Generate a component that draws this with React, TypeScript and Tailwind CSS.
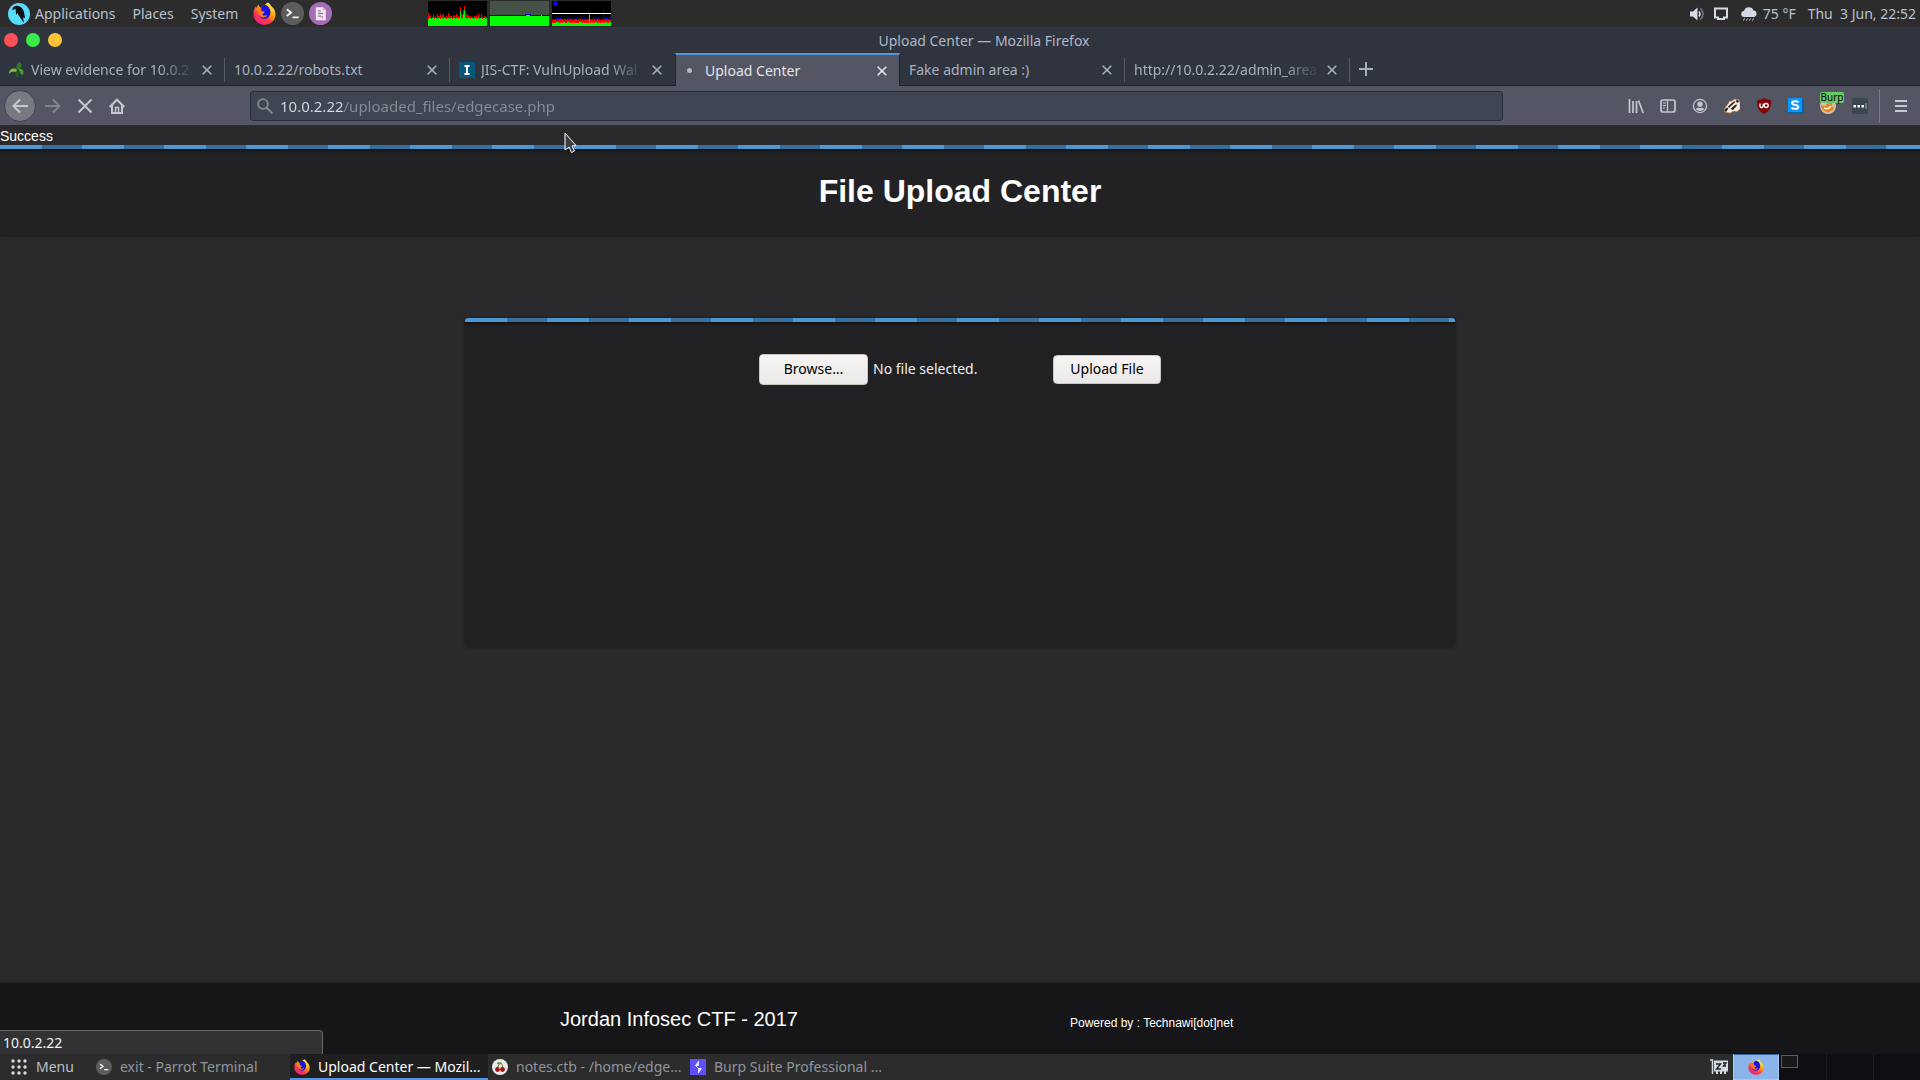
import React from "react";

const stripe =
  "h-1 bg-[repeating-linear-gradient(90deg,#4f97d3_0px,#4f97d3_42px,#366e9e_42px,#366e9e_82px)]";

function FirefoxLogo({ className }: { className: string }) {
  return (
    <svg viewBox="0 0 24 24" className={className} aria-hidden="true">
      <defs>
        <linearGradient id="fox" x1="0.8" y1="0.1" x2="0.25" y2="0.95">
          <stop offset="0" stopColor="#fff44f" />
          <stop offset="0.4" stopColor="#ff980e" />
          <stop offset="0.7" stopColor="#ff3647" />
          <stop offset="1" stopColor="#f0207f" />
        </linearGradient>
      </defs>
      <path
        fill="url(#fox)"
        d="M15.5.5c1.500 1 3 2.500 3.800 4.300C21.500 6.300 23.500 9.500 23.500 13c0 6-5 10.700-11.400 10.700S.6 18.900.6 12.700c0-3 .7-6.300 2.600-8.300.2.800.4 1.300.8 1.900.3-1.500.9-2.700 1.900-3.600.1 1.500.9 2.700 2 3.200z"
      />
      <path
        fill="#1a12e0"
        d="M8 6.500c1-2 3-3.500 5-3.700 2.600 1 4.500 3.300 5 6.200.8 4-1.600 8.500-6 8.500-3.400 0-5.700-2.400-6-5.300 1 .8 2.300 1 3.500.5L12 11.500c-.6-1-2-1.300-3.300-1.300-.9-.8-.8-1.600 0-2.300z"
      />
      <path
        fill="#ff7a1a"
        d="M5 7.500C6.300 6.600 8 6.600 9.200 7.300c-.8.800-.9 1.700-.2 2.300h2.600c.5.300.4.900 0 1.300l-2 1.300c.2 1.300 1 2 2.200 2 1.300 0 2-.8 3.200-.3-.8 1.600-2.700 2.500-4.700 2.200C7 15.600 5 12.500 5 7.500z"
      />
    </svg>
  );
}

function TerminalIcon({ className }: { className: string }) {
  return (
    <svg viewBox="0 0 24 24" className={className} fill="none" aria-hidden="true">
      <circle cx="12" cy="12" r="12" fill="#5c5c5c" />
      <path d="M6 7.500l4.500 3.500L6 14.500M12 16h6.500" stroke="#f0f0f0" strokeWidth="2" />
    </svg>
  );
}

function ParrotIcon() {
  return (
    <svg viewBox="0 0 22 22" className="size-[22px]" aria-hidden="true">
      <circle cx="11" cy="11" r="11" fill="#55dcff" />
      <path
        fill="#0b1014"
        d="M4.500 5.500C5.300 3.600 7 2.700 9 2.800c3.200.2 5.700 2.200 6.700 5.200.8 2.600.8 5 1.500 7.300l-2.100-1.100.8 5.700-3.600-5.200C11 13 9.800 11.500 9.500 9.600L8.700 12C7.700 10 7.600 8 7.900 6.300 6.700 6 5.600 6 4.500 7.800z"
      />
    </svg>
  );
}

function NotesIcon() {
  return (
    <svg viewBox="0 0 22 22" className="size-[23px]" aria-hidden="true">
      <circle cx="11" cy="11" r="11" fill="#a56db3" />
      <path d="M6.500 5h7l2.500 2.500V17.500H6.500z" fill="#f4eef5" />
      <path d="M13 5v3h3" fill="#cbb0d2" />
      <path d="M8.500 8.500h3M8.500 11h5M8.500 13.500h3M12.500 13.500v2" stroke="#a56db3" strokeWidth="1.200" />
    </svg>
  );
}

const cpu = [13, 10, 11, 8, 9, 12, 9, 10, 8, 12, 10, 9, 12, 8, 11, 12, 9, 9, 10, 8, 13, 9, 10, 10, 8, 11, 10, 9, 12, 9, 10, 9, 19, 12, 11, 16, 20, 13, 11, 12, 10, 9, 10, 9, 9, 8, 10, 9, 11, 9, 13, 9, 8, 12, 9, 8, 10, 9, 9];

function Graphs() {
  return (
    <div className="flex gap-[3px]" aria-label="System monitor">
      <svg viewBox="0 0 59 25" className="h-[25px] w-[59px]" shapeRendering="crispEdges">
        <rect width="59" height="25" fill="#000" />
        {cpu.map((v, i) => (
          <g key={i}>
            <rect x={i} y={25 - v} width="1" height={v} fill="#f00" />
            <rect x={i} y={v > 15 ? 29 - v : 17 + ((i * 5) % 3 === 0 ? 1 : 0)} width="1" height="25" fill="#0f0" />
          </g>
        ))}
      </svg>
      <svg viewBox="0 0 59 25" className="h-[25px] w-[59px]" shapeRendering="crispEdges">
        <rect width="59" height="25" fill="#465248" />
        <rect y="14" width="59" height="11" fill="#0f0" />
        <path d="M0 14h35v-1h5v1h19" stroke="#00c" fill="none" />
        <path d="M36 14h4M51 14h1" stroke="#0f0" strokeWidth="1" />
      </svg>
      <svg viewBox="0 0 59 25" className="h-[25px] w-[59px]" shapeRendering="crispEdges">
        <rect width="59" height="25" fill="#000" />
        <rect x="1" width="5" height="5" fill="#00f" />
        {cpu.map((v, i) => (
          <g key={i}>
            <rect x={i} y={i === 51 ? 9 : i === 37 ? 11 : Math.min(18, 25 - (v % 10))} width="1" height="25" fill="#00c" />
            <rect x={i} y={i === 37 ? 12 : 18 + (v % 2)} width="1" height="25" fill="#f00" />
            <rect x={i} y={i === 37 ? 14 : 21 + (v % 3 === 0 ? 0 : 1)} width="1" height="25" fill="#0f0" />
          </g>
        ))}
        <rect y="12" width="59" height="1" fill="#fff" />
      </svg>
    </div>
  );
}

function TopPanel() {
  return (
    <header className="relative flex h-[27px] items-center justify-between bg-[#2c2c2c] text-[#b9c0cc]">
      <div className="flex items-center">
        <button className="ml-2 flex items-center gap-[5px]">
          <ParrotIcon />
          Applications
        </button>
        <button className="ml-[17px]">Places</button>
        <button className="ml-[17px]">System</button>
        <div className="ml-[15px] flex items-center gap-[5px]">
          <button aria-label="Firefox"><FirefoxLogo className="size-[23px]" /></button>
          <button aria-label="Terminal"><TerminalIcon className="size-[23px]" /></button>
          <button aria-label="Text editor"><NotesIcon /></button>
        </div>
      </div>
      <div className="absolute top-px left-[428px]"><Graphs /></div>
      <div className="flex items-center pr-1">
        <svg viewBox="0 0 16 16" className="size-4" fill="none" aria-label="Volume">
          <path d="M1 5.500h3L8.500 1.500v13L4 10.500H1z" fill="#d3dae3" />
          <path d="M10 5.500q2 2.500 0 5" stroke="#d3dae3" strokeWidth="1.500" />
          <path d="M11.500 2.500q5 5.500 0 11" stroke="#74787d" strokeWidth="1.500" />
        </svg>
        <svg viewBox="0 0 16 16" className="ml-2 size-4" fill="none" aria-label="Network">
          <path d="M2 2.500h12v9H11v1.500H5v-1.500H2z" stroke="#d3dae3" strokeWidth="2" />
        </svg>
        <svg viewBox="0 0 16 16" className="ml-3 size-4" aria-label="Rain">
          <path d="M3.500 11a3 3 0 0 1-.5-6A5 5 0 0 1 12.500 4.500 3.300 3.300 0 0 1 13 11z" fill="#d3dae3" />
          <path d="M3.500 12.500l-1 2M6.500 12.500l-1 2M9.500 12.500l-1 2M12.500 12.500l-1 2" stroke="#d3dae3" />
        </svg>
        <span className="ml-1.5">75 °F</span>
        <span className="ml-3 whitespace-pre">Thu  3 Jun, 22:52</span>
      </div>
    </header>
  );
}

function Close() {
  return (
    <button aria-label="Close tab" className="flex size-4 shrink-0 items-center justify-center">
      <svg viewBox="0 0 10 10" className="size-2.5" stroke="currentColor" strokeWidth="1.600" aria-hidden="true">
        <path d="M.7.7l8.600 8.600M9.300.7L.7 9.300" />
      </svg>
    </button>
  );
}

const tabs = [
  { title: "View evidence for 10.0.2.", icon: "leaf", fade: true },
  { title: "10.0.2.22/robots.txt" },
  { title: "JIS-CTF: VulnUpload Wal", icon: "jis", fade: true },
  { title: "Upload Center", icon: "dot", active: true },
  { title: "Fake admin area :)" },
  { title: "http://10.0.2.22/admin_area", fade: true },
];

function TabIcon({ kind }: { kind?: string }) {
  if (kind === "leaf")
    return (
      <svg viewBox="0 0 16 16" className="mr-1.5 size-4 shrink-0" aria-hidden="true">
        <path d="M7.500 6Q7 2 11 0q3.500 3 0 6.500L9 7.500z" fill="#2f7d2a" />
        <path d="M0 12q0-6 6-5.500 3 1 1.500 3.500Q3 8.500 0 12z" fill="#7cc243" />
        <path d="M9 7q7-1 5 5.500-1.500 1-2.500-1-.5-3-2.500-4.500z" fill="#4b9e31" />
        <path d="M8 8q3.500 3 .5 8-3.500-3-.5-8z" fill="#245f22" />
      </svg>
    );
  if (kind === "jis")
    return (
      <svg viewBox="0 0 16 16" className="mr-1.5 size-4 shrink-0" aria-hidden="true">
        <rect width="16" height="16" fill="#045879" />
        <path d="M5.500 4h5M5.500 12h5M8 4v8" stroke="#fff" strokeWidth="2" />
      </svg>
    );
  if (kind === "dot")
    return (
      <span className="mr-2 flex size-4 shrink-0 items-center justify-center">
        <span className="size-[5px] rounded-full bg-[#b6bac3]" />
      </span>
    );
  return null;
}

function Tabs() {
  return (
    <nav className="flex h-[33px] items-stretch">
      {tabs.map((t) => (
        <div
          key={t.title}
          className={
            t.active
              ? "flex w-[225px] items-center border-x border-t-2 border-x-[#20232b] border-t-[#5294e2] bg-[#545763] pr-[9px] pl-[5px] text-[#e3e6ec]"
              : "relative flex w-[225px] items-center border-b border-[#20232b] pt-0.5 pr-[10px] pl-[9px] text-[#a9b1bf]"
          }
        >
          <TabIcon kind={t.icon} />
          <span
            className={
              t.fade
                ? "min-w-0 flex-1 whitespace-nowrap [mask-image:linear-gradient(to_left,transparent,black_36px)]"
                : "min-w-0 flex-1 whitespace-nowrap"
            }
          >
            {t.title}
          </span>
          <span className="ml-1 flex"><Close /></span>
          {!t.active && !t.title.startsWith("JIS") && (
            <span className="absolute top-[5px] right-0 h-6 w-px bg-[#555963]" />
          )}
        </div>
      ))}
      <div className="flex flex-1 items-center border-b border-[#20232b] pl-[9px] text-[#a9b1bf]">
        <button aria-label="New tab">
          <svg viewBox="0 0 14 14" className="size-3.5" stroke="currentColor" strokeWidth="2" aria-hidden="true">
            <path d="M7 0v14M0 7h14" />
          </svg>
        </button>
      </div>
    </nav>
  );
}

function ToolButton({ label, children }: { label: string; children: React.ReactNode }) {
  return (
    <button aria-label={label} className="flex size-8 items-center justify-center">
      {children}
    </button>
  );
}

function Toolbar() {
  return (
    <div className="flex h-10 items-center border-b border-[#2b2e39] bg-[#545763] pl-1 text-[#c3c8d2]">
      <button aria-label="Back" className="mr-px flex size-8 items-center justify-center rounded-full border border-[#3d414c] bg-[#777a83]">
        <svg viewBox="0 0 16 16" className="size-4" fill="none" stroke="currentColor" strokeWidth="2" aria-hidden="true">
          <path d="M16 8H1.500M8 1.500L1.500 8 8 14.500" />
        </svg>
      </button>
      <ToolButton label="Forward">
        <svg viewBox="0 0 16 16" className="size-4" fill="none" stroke="#80848e" strokeWidth="2" aria-hidden="true">
          <path d="M0 8h14.500M8 1.500L14.500 8 8 14.500" />
        </svg>
      </ToolButton>
      <ToolButton label="Stop">
        <svg viewBox="0 0 16 16" className="size-4" fill="none" stroke="currentColor" strokeWidth="2" aria-hidden="true">
          <path d="M1.500 1.500l13 13M14.500 1.500l-13 13" />
        </svg>
      </ToolButton>
      <ToolButton label="Home">
        <svg viewBox="0 0 16 16" className="size-4" fill="none" stroke="currentColor" strokeWidth="2" aria-hidden="true">
          <path d="M.7 9L8 1.700 15.300 9M3 7.500V15h10V7.500" />
          <path d="M6.500 15V9.500h3V15" strokeWidth="1.500" />
        </svg>
      </ToolButton>
      <form className="mr-[117px] ml-[117px] flex h-[30px] flex-1 items-center rounded-[3px] border border-[#2b2e39] bg-[#404552] pl-1.5" onSubmit={(e) => e.preventDefault()}>
        <svg viewBox="0 0 16 16" className="size-4 shrink-0" fill="none" stroke="#878c97" strokeWidth="1.800" aria-hidden="true">
          <circle cx="6" cy="6" r="4.800" />
          <path d="M9.500 9.500l6 6" />
        </svg>
        <input
          aria-label="Address"
          defaultValue="10.0.2.22/uploaded_files/edgecase.php"
          className="ml-[7px] w-full bg-[linear-gradient(90deg,#d3dae3_64px,#868b96_64px)] bg-clip-text text-[15px] text-transparent outline-none"
        />
      </form>
      <ToolButton label="Library">
        <svg viewBox="0 0 16 16" className="size-4" stroke="currentColor" strokeWidth="2" aria-hidden="true">
          <path d="M1.500 1v14M5 3v12M8.500 3v12M10.500 2.500L15.200 15" strokeWidth="1.700" />
        </svg>
      </ToolButton>
      <ToolButton label="Sidebars">
        <svg viewBox="0 0 16 16" className="size-4" fill="none" stroke="currentColor" strokeWidth="1.700" aria-hidden="true">
          <rect x="1" y="2" width="14" height="12" rx="2" />
          <path d="M7.500 2v12M3 5h3M3 7.500h3M3 10h2" strokeWidth="1.200" />
        </svg>
      </ToolButton>
      <ToolButton label="Account">
        <svg viewBox="0 0 16 16" className="size-4" aria-hidden="true">
          <circle cx="8" cy="8" r="6.600" fill="none" stroke="currentColor" strokeWidth="1.200" />
          <circle cx="8" cy="6.200" r="2.700" fill="currentColor" />
          <path d="M3.500 10.500q1.500 0 2.500-1 2 1 4 0 1 1 2.500 1Q11 13 8 13t-4.500-2.500z" fill="currentColor" />
        </svg>
      </ToolButton>
      <ToolButton label="Privacy Badger">
        <svg viewBox="0 0 16 16" className="size-4" aria-hidden="true">
          <path d="M0 11.500L4 6l1.500-2.500L8 3l3-2 2 1 1.500-.5L16 5v6l-3 2.500-3-.5-4 2-5-1z" fill="#fbf0e4" stroke="#e08a45" strokeWidth=".7" />
          <path d="M0 12l3-2.500 1.500 1L2 14zM4 8.500L9 4l2.500-1-1 2L7.500 7.500 5 10zM6.500 11L11 7l2.500-.5-1 1.500L9 12zM11.500 2.500L14 2l1 2-2 1z" fill="#252020" />
        </svg>
      </ToolButton>
      <ToolButton label="uBlock Origin">
        <svg viewBox="0 0 16 16" className="size-4" fill="none" aria-hidden="true">
          <path d="M8 0q3 2 7 2 .8 11-7 14Q.2 13 1 2q4 0 7-2z" fill="#800606" />
          <path d="M4 5.500v2.700q0 1.300 1.500 1.300T7.200 8.200V5.500" stroke="#fff" strokeWidth="1.300" />
          <circle cx="10.200" cy="7.500" r="2" stroke="#fff" strokeWidth="1.300" />
        </svg>
      </ToolButton>
      <ToolButton label="Stylus">
        <svg viewBox="0 0 16 16" className="size-4" fill="none" aria-hidden="true">
          <path d="M0 14h14V0l2 2v14H2z" fill="#0462a8" />
          <rect width="14" height="14" fill="#0a96ff" />
          <path d="M10.500 4.300Q9.500 3.200 7 3.200 4 3.200 4 5q0 1.500 3 1.900 3.300.3 3.300 2 0 1.900-3.300 1.900-2.500 0-3.500-1.200" stroke="#fff" strokeWidth="1.900" />
        </svg>
      </ToolButton>
      <div className="relative">
        <ToolButton label="FoxyProxy">
          <svg viewBox="0 0 16 16" className="size-4" aria-hidden="true">
            <circle cx="8" cy="8" r="8" fill="#d5c1a6" />
            <path d="M1 7q4 2 5 0 3-4 7-2-2 1-1 3l2 2q-2 4-6 4T1 9z" fill="#e58721" />
            <path d="M4 10q4 2 7-2" stroke="#fff0d7" strokeWidth="1.500" fill="none" />
          </svg>
        </ToolButton>
        <span className="absolute top-[2px] left-2 h-[11px] w-6 rounded-[2px] bg-[#66cc66] text-center text-[10px] leading-[11px] text-black">Burp</span>
      </div>
      <ToolButton label="Extension">
        <svg viewBox="0 0 16 16" className="size-4" aria-hidden="true">
          <rect width="16" height="16" rx="1.500" fill="#3a4750" />
          <path d="M1.500 7h2.500v2.500H1.500zM5.500 7H8v2.500H5.500zM9.500 7H12v2.500H9.500z" fill="#fff" />
          <path d="M14 5v6" stroke="#9aa5ac" />
        </svg>
      </ToolButton>
      <span className="mr-[5px] ml-[3px] h-[34px] w-px bg-[#787b85]" />
      <ToolButton label="Menu">
        <svg viewBox="0 0 14 14" className="size-3.5" stroke="currentColor" strokeWidth="2" aria-hidden="true">
          <path d="M1 2h12M1 7h12M1 12h12" />
        </svg>
      </ToolButton>
      <span className="w-[3px]" />
    </div>
  );
}

function Page() {
  return (
    <div className="relative flex flex-1 flex-col bg-[#2a2a2c] font-['Liberation_Sans',Arial,sans-serif] text-white">
      <p className="h-[19px] text-[14px] leading-[20px]">Success</p>
      <div className={stripe} />
      <div className="flex h-[88px] items-center justify-center bg-[#222224] pb-1 shadow-[inset_0_4px_4px_-4px_#000]">
        <h1 className="text-[32px] font-bold">File Upload Center</h1>
      </div>
      <main className="mx-auto mt-[81px] w-[990px] overflow-hidden rounded-[3px] bg-[#212123] shadow-[0_0_3px_#151515]">
        <div className={stripe} />
        <form className="flex h-[325px] items-start justify-center pt-8 font-['Noto_Sans',sans-serif] shadow-[inset_0_4px_4px_-4px_#000]" onSubmit={(e) => e.preventDefault()}>
          <label className="flex items-center text-[#eeeeec]">
            <span className="flex h-[31px] w-[109px] items-center justify-center rounded-[4px] border border-[#cdc7c2] bg-linear-to-b from-[#f6f5f4] to-[#ebe9e8] pb-0.5 text-black">Browse…</span>
            <input type="file" className="sr-only" />
            <span className="ml-[5px] w-[180px] pb-0.5">No file selected.</span>
          </label>
          <button className="mt-px h-[29px] w-[108px] rounded-[4px] border border-[#cdc7c2] bg-linear-to-b from-[#f6f5f4] to-[#ebe9e8] pb-0.5 text-black">Upload File</button>
        </form>
      </main>
      <footer className="mt-auto flex h-[71px] justify-center bg-[#161618] shadow-[0_-1px_2px_#1f1f20]">
        <div className="flex w-[800px] items-center">
          <p className="w-[510px] text-[20px]">Jordan Infosec CTF - 2017</p>
          <p className="pt-2 text-[12px]">Powered by : Technawi[dot]net</p>
        </div>
      </footer>
      <div className="absolute bottom-0 left-0 flex h-6 w-[323px] items-center rounded-tr-[4px] border-t border-r border-[#68686a] bg-[#323234] pl-[3px] font-['Noto_Sans',sans-serif] text-[#f1f1f1]">10.0.2.22</div>
      <svg viewBox="0 0 14 22" className="absolute top-1.5 left-[564px] h-[22px] w-3.5" aria-hidden="true">
        <path d="M1 1v17l4-3 2.500 5.500 3-1.500-2.500-5 4-.5z" fill="#3f3f3f" stroke="#fff" />
      </svg>
    </div>
  );
}

function Task({ label, active, children }: { label: string; active?: boolean; children: React.ReactNode }) {
  return (
    <button
      className={
        active
          ? "flex w-[198px] items-center gap-2 border-b-2 border-[#5294e2] bg-[#1f1f20] pt-0.5 pl-1 whitespace-nowrap text-white"
          : "flex w-[198px] items-center gap-2 pl-1 whitespace-nowrap text-[#8f959e]"
      }
    >
      {children}
      {label}
    </button>
  );
}

function Taskbar() {
  return (
    <footer className="flex h-[26px] items-stretch bg-[#2c2c2c]">
      <button className="flex w-[92px] items-center gap-[9px] pl-[11px] text-[#b9c0cc]">
        <svg viewBox="0 0 16 16" className="size-4 shrink-0" fill="#d3dae3" aria-hidden="true">
          {[2, 8, 14].map((x) => [2, 8, 14].map((y) => <circle key={`${x}-${y}`} cx={x} cy={y} r="1.700" />))}
        </svg>
        Menu
      </button>
      <Task label="exit - Parrot Terminal"><TerminalIcon className="size-4 shrink-0" /></Task>
      <Task label="Upload Center — Mozil..." active><FirefoxLogo className="size-4 shrink-0" /></Task>
      <Task label="notes.ctb - /home/edge...">
        <svg viewBox="0 0 16 16" className="size-4 shrink-0" aria-hidden="true">
          <circle cx="8" cy="8" r="8" fill="#ecebe8" />
          <path d="M5.500 9Q6 5 9 4q2 2 1.500 5" stroke="#4d7a29" fill="none" />
          <path d="M4.500 4.500Q7 2 10 4q-3 2-5.500.5z" fill="#5da130" />
          <circle cx="5.500" cy="10.500" r="2.400" fill="#a90d17" />
          <circle cx="10.500" cy="10.500" r="2.400" fill="#a90d17" />
        </svg>
      </Task>
      <Task label="Burp Suite Professional ...">
        <svg viewBox="0 0 16 16" className="size-4 shrink-0" aria-hidden="true">
          <rect width="16" height="16" fill="#604fff" />
          <path d="M8.500 2v4.500H5.500l3 3V14l3-4.500h-3l-3-3z" fill="#fff" stroke="#fff" strokeWidth=".6" />
        </svg>
      </Task>
      <div className="ml-auto flex items-stretch">
        <span className="mr-[5px] flex items-center">
          <svg viewBox="0 0 18 16" className="h-4 w-[18px]" fill="none" aria-label="Indicator">
            <path d="M0 1h2.500v14" stroke="#d3dae3" strokeWidth="1.500" />
            <path d="M4 1.500h14v11h-2V15h-2v-2.500h-2V15h-2v-2.500H8V15H6v-2.500H4z" fill="#d3dae3" />
            <path d="M6 5h4.500L6.500 10H11M13 4h3l-2.500 3H16" stroke="#222" strokeWidth="1.400" />
          </svg>
        </span>
        <button aria-label="Workspace 1" className="flex w-[46px] items-center justify-center border border-[#a5c9f5] border-t-[#3a6ea8] bg-[#8ab4ea]">
          <FirefoxLogo className="size-4" />
        </button>
        <button aria-label="Workspace 2" className="w-[48px] border-r border-[#1b1c20] bg-[#0e0f12] pl-0.5">
          <span className="mb-3 block h-[13px] w-[17px] border border-[#5d5e62] bg-[#18191d]" />
        </button>
        <button aria-label="Workspace 3" className="w-[47px] border-r border-[#1b1c20] bg-[#0e0f12]" />
        <button aria-label="Workspace 4" className="w-[46px] bg-[#0e0f12]" />
      </div>
    </footer>
  );
}

export default function App() {
  return (
    <div className="flex min-h-screen flex-col bg-[#2f343f] font-['Noto_Sans',sans-serif] text-[14px] leading-5">
      <TopPanel />
      <div className="relative flex h-[26px] items-center justify-center pt-0.5 pl-12 text-[#b0b8c5]">
        <div className="absolute top-1.5 left-1 flex gap-2">
          <button aria-label="Close window" className="size-3.5 rounded-full bg-[#fc4f56]" />
          <button aria-label="Maximize window" className="size-3.5 rounded-full bg-[#39ea4b]" />
          <button aria-label="Minimize window" className="size-3.5 rounded-full bg-[#fdc437]" />
        </div>
        Upload Center — Mozilla Firefox
      </div>
      <Tabs />
      <Toolbar />
      <Page />
      <Taskbar />
    </div>
  );
}
